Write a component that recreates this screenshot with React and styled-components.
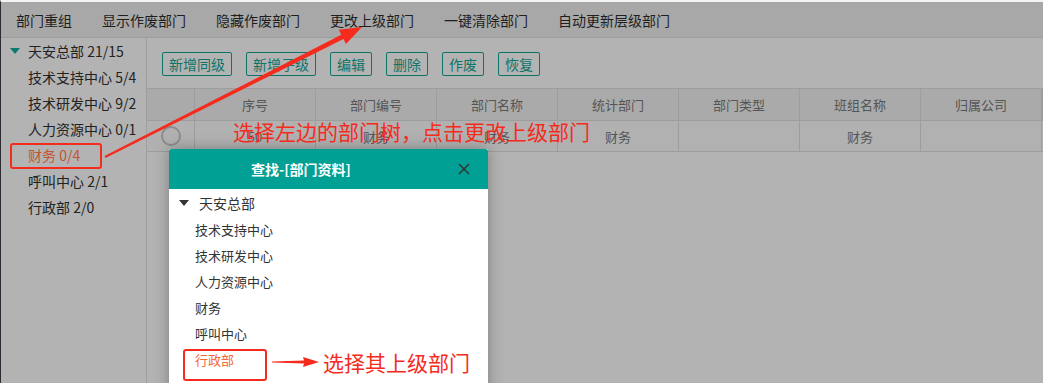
import React from 'react';
import styled, { createGlobalStyle } from 'styled-components';

const GlobalStyle = createGlobalStyle`
  html, body {
    margin: 0;
    padding: 0;
    background: #b3b3b3;
  }
  * { box-sizing: border-box; }
  body {
    font-family: "Noto Sans CJK SC", "Liberation Sans", sans-serif;
    font-size: 14px;
  }
`;

const Page = styled.div`
  position: relative;
  width: 1043px;
  height: 383px;
  overflow: hidden;
  background: #b3b3b3;
  border-left: 1px solid #2b2b33;
  border-top: 2px solid #f4f4f4;
  display: flex;
  flex-direction: column;
`;

const MenuBar = styled.div`
  display: flex;
  height: 36px;
  align-items: center;
  background: #a8a8a8;
  border-bottom: 1px solid #9c9c9c;
`;

const MenuItem = styled.span`
  padding: 0 15px;
  color: #1e1e1e;
  line-height: 36px;
`;

const Main = styled.div`
  flex: 1;
  display: flex;
`;

const TreePanel = styled.div`
  width: 147px;
  border-right: 1px solid #9f9f9f;
  padding-top: 0;
`;

const TreeRow = styled.div`
  display: flex;
  align-items: center;
  height: 26px;
  padding-left: ${p => (p.$root ? 9 : 27)}px;
  color: ${p => (p.$active ? '#c4552f' : '#222')};
  white-space: nowrap;
`;

const Caret = styled.span`
  width: 0;
  height: 0;
  border-left: 5px solid transparent;
  border-right: 5px solid transparent;
  border-top: 6px solid ${p => p.$color};
  margin-right: ${p => p.$gap}px;
`;

const Content = styled.div`
  flex: 1;
  display: flex;
  flex-direction: column;
`;

const ButtonBar = styled.div`
  display: flex;
  gap: 14px;
  padding: 14px 15px 12px;
`;

const ToolButton = styled.button`
  height: 24px;
  padding: 0 6px;
  border: 1px solid #0f7468;
  border-radius: 2px;
  background: transparent;
  color: #0f7468;
  font-family: inherit;
  font-size: 14px;
  line-height: 22px;
`;

const Table = styled.div`
  display: grid;
  grid-template-columns: 48px repeat(7, 121px) 1fr;
  border-top: 1px solid #9d9d9d;
`;

const HeadCell = styled.div`
  height: 32px;
  display: flex;
  align-items: center;
  justify-content: center;
  background: #aaaaaa;
  border-right: 1px solid #9d9d9d;
  border-bottom: 1px solid #9d9d9d;
  color: #555;
  font-size: 13px;
  &:last-child { border-right: none; }
`;

const Cell = styled.div`
  height: 31px;
  display: flex;
  align-items: center;
  justify-content: center;
  background: #b1b1b1;
  border-right: 1px solid #9d9d9d;
  border-bottom: 1px solid #9d9d9d;
  color: #555;
  font-size: 13px;
  &:last-child { border-right: none; }
`;

const Radio = styled.span`
  width: 20px;
  height: 20px;
  border-radius: 50%;
  border: 2px solid #8c8c8c;
`;

const Modal = styled.div`
  position: absolute;
  left: 168px;
  top: 147px;
  width: 319px;
  height: 260px;
  background: #fff;
  box-shadow: 0 0 14px rgba(0, 0, 0, 0.3);
`;

const ModalHeader = styled.div`
  height: 40px;
  background: #00a094;
  display: flex;
  align-items: center;
  padding: 0 18px 0 82px;
  border-radius: 2px 2px 0 0;
`;

const ModalTitle = styled.span`
  flex: 1;
  color: #fff;
  font-weight: bold;
  font-size: 14px;
`;

const ModalBody = styled.div`
  padding-top: 1px;
`;

const ModalRow = styled.div`
  display: flex;
  align-items: center;
  height: 26px;
  padding-left: ${p => (p.$root ? 10 : 26)}px;
  color: ${p => (p.$active ? '#f2693a' : '#333')};
  font-size: 13px;
`;

const Overlay = styled.svg`
  position: absolute;
  left: -1px;
  top: -2px;
  pointer-events: none;
`;

const Note = styled.div`
  position: absolute;
  left: ${p => p.$x}px;
  top: ${p => p.$y}px;
  color: #f52b1e;
  font-size: 21px;
  line-height: 24px;
  white-space: nowrap;
`;

const Mark = styled.div`
  position: absolute;
  left: ${p => p.$x}px;
  top: ${p => p.$y}px;
  width: ${p => p.$w}px;
  height: ${p => p.$h}px;
  border: 2px solid #f52b1e;
  border-radius: 3px;
`;

const menus = ['部门重组', '显示作废部门', '隐藏作废部门', '更改上级部门', '一键清除部门', '自动更新层级部门'];
const tree = ['技术支持中心 5/4', '技术研发中心 9/2', '人力资源中心 0/1', '财务 0/4', '呼叫中心 2/1', '行政部 2/0'];
const buttons = ['新增同级', '新增子级', '编辑', '删除', '作废', '恢复'];
const columns = ['', '序号', '部门编号', '部门名称', '统计部门', '部门类型', '班组名称', '归属公司', ''];
const row = ['50', '财务', '财务', '财务', '', '财务', '', ''];
const modalTree = ['技术支持中心', '技术研发中心', '人力资源中心', '财务', '呼叫中心', '行政部'];

export default function App() {
  return (
    <>
      <GlobalStyle />
      <Page>
        <MenuBar>
          {menus.map(m => <MenuItem key={m}>{m}</MenuItem>)}
        </MenuBar>
        <Main>
          <TreePanel>
            <TreeRow $root>
              <Caret $color="#0b7a6e" $gap={8} />
              天安总部 21/15
            </TreeRow>
            {tree.map(t => (
              <TreeRow key={t} $active={t.startsWith('财务')}>{t}</TreeRow>
            ))}
          </TreePanel>
          <Content>
            <ButtonBar>
              {buttons.map(b => <ToolButton key={b}>{b}</ToolButton>)}
            </ButtonBar>
            <Table>
              {columns.map((c, i) => <HeadCell key={i}>{c}</HeadCell>)}
              <Cell><Radio /></Cell>
              {row.map((c, i) => <Cell key={i}>{c}</Cell>)}
            </Table>
          </Content>
        </Main>

        <Modal>
          <ModalHeader>
            <ModalTitle>查找-[部门资料]</ModalTitle>
            <svg width="12" height="12" viewBox="0 0 12 12">
              <path d="M1 1L11 11M11 1L1 11" stroke="#333" strokeWidth="1.5" />
            </svg>
          </ModalHeader>
          <ModalBody>
            <ModalRow $root>
              <Caret $color="#333" $gap={10} />
              <span style={{ fontSize: 14 }}>天安总部</span>
            </ModalRow>
            {modalTree.map(t => (
              <ModalRow key={t} $active={t === '行政部'}>{t}</ModalRow>
            ))}
          </ModalBody>
        </Modal>

        <Mark $x={9} $y={141} $w={92} $h={26} />
        <Mark $x={182} $y={347} $w={84} $h={32} />
        <Note $x={232} $y={117}>选择左边的部门树，点击更改上级部门</Note>
        <Note $x={322} $y={348}>选择其上级部门</Note>
        <Overlay width="1043" height="383" viewBox="0 0 1043 383">
          <polygon
            fill="#f52b1e"
            points="104.5,156.1 341.3,34.7 338.8,29.8 362,27 346,44 343.5,39.1 105.5,157.9"
          />
          <polygon
            fill="#f52b1e"
            points="272,361.5 304,360.5 303,357 319,362 303,367 304,363.5 272,362.5"
          />
        </Overlay>
      </Page>
    </>
  );
}
